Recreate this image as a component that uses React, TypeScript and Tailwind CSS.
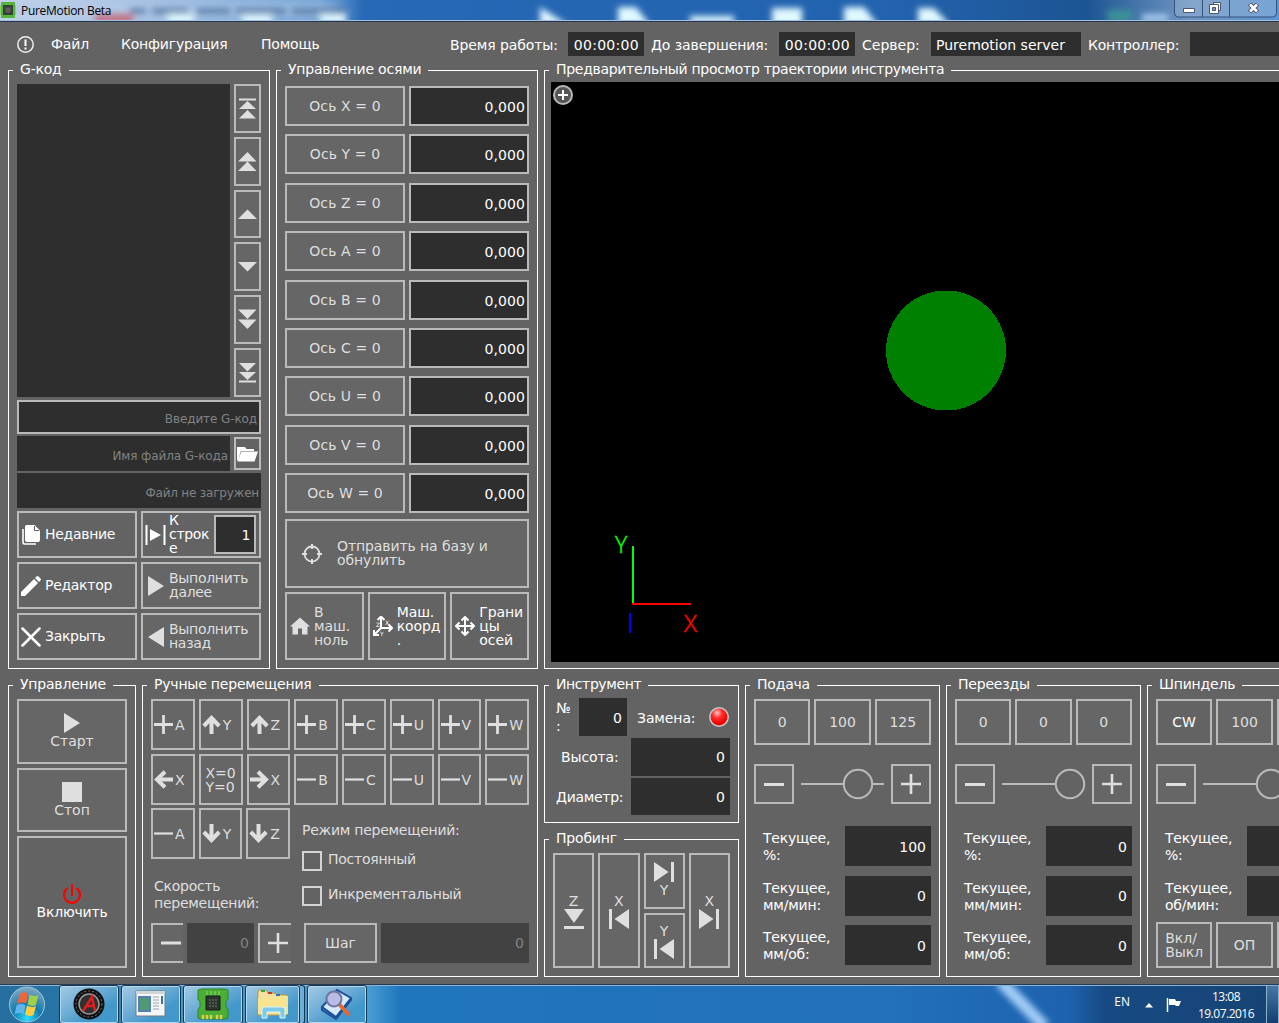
import type { ReactNode } from "react";

const FG = "#dfdfdf";

function Group({ title, className = "", titleClass = "tracking-[-0.2px]", children }: { title: string; className?: string; titleClass?: string; children?: ReactNode }) {
  return (
    <section className={`relative shrink-0 border border-white ${className}`}>
      <h2 className={`absolute -top-[12px] left-[4px] bg-[#636363] pr-[7px] pl-[7px] text-[14px] leading-[20px] whitespace-nowrap text-white ${titleClass}`}>
        {title}
      </h2>
      {children}
    </section>
  );
}

function Btn({ className = "", on = false, children }: { className?: string; on?: boolean; children?: ReactNode }) {
  return (
    <button
      className={`flex items-center overflow-hidden border-2 border-[#bababa] text-left text-[14px] leading-[14px] whitespace-pre ${on ? "bg-[#636363] text-white" : "bg-[#666666] text-[#dfdfdf]"} ${className}`}
    >
      {children}
    </button>
  );
}

function Field({ className = "", children }: { className?: string; children?: ReactNode }) {
  return (
    <div className={`flex shrink-0 items-center bg-[#2e2e2e] text-[14px] leading-[16px] text-white ${className}`}>
      {children}
    </div>
  );
}

function Svg({ w = 20, h = 20, box, className = "", children }: { w?: number; h?: number; box?: string; className?: string; children: ReactNode }) {
  return (
    <svg width={w} height={h} viewBox={box ?? `0 0 ${w} ${h}`} fill="none" className={`shrink-0 ${className}`}>
      {children}
    </svg>
  );
}

const SCROLL = [
  <><path d="M1 1.500h17" stroke={FG} strokeWidth="2" /><path d="M9.500 3l8.500 8H1zM9.500 12l8.500 8.500H1z" fill={FG} /></>,
  <path d="M9.500 1l9 9.500H0zM9.500 10.500l9 9.500H0z" fill={FG} />,
  <path d="M9.500 5.500l9.500 9.500H0z" fill={FG} />,
  <path d="M9.500 15.500l9.500-9.500H0z" fill={FG} />,
  <path d="M9.500 10l9-9.500H0zM9.500 20l9-9.500H0z" fill={FG} />,
  <><path d="M1 19.500h17" stroke={FG} strokeWidth="2" /><path d="M9.500 9.500l8.500-8.500H1zM9.500 18l8.500-8H1z" fill={FG} /></>,
];

function GCode() {
  return (
    <Group title="G-код" className="flex h-[599px] w-[262px] flex-col pt-[13px] pr-[8px] pl-[8px]">
      <div className="flex h-[313px] gap-1">
        <div className="w-[213px] bg-[#2e2e2e]" />
        <div className="flex w-[27px] flex-col gap-1">
          {SCROLL.map((icon, i) => (
            <Btn key={i} className="flex-1 justify-center"><Svg w={19} h={21}>{icon}</Svg></Btn>
          ))}
        </div>
      </div>
      <div className="mt-[3px] flex h-[34px] items-center justify-end border-2 border-[#bababa] bg-[#2e2e2e] pt-[4px] pr-[2px] text-[12px] tracking-[-0.1px] text-[#828282]">Введите G-код</div>
      <div className="mt-[2px] flex h-[35px] items-center gap-1">
        <div className="flex h-[35px] w-[213px] items-center justify-end bg-[#2e2e2e] pt-[5px] pr-[2px] text-[12px] tracking-[-0.1px] text-[#828282]">Имя файла G-кода</div>
        <Btn on className="h-[33px] w-[27px] justify-center">
          <Svg w={21} h={16}><path d="M0 1h8l1.500 2H17v2H4L1.500 13 0 15zM4.500 5.500H21L17.500 15.500H0.500z" fill="#fff" /></Svg>
        </Btn>
      </div>
      <div className="mt-[2px] flex h-[35px] items-center justify-end bg-[#2e2e2e] pt-[5px] pr-[2px] text-[12px] tracking-[-0.2px] text-[#828282]">Файл не загружен</div>
      <div className="mt-[3px] grid grid-cols-2 grid-rows-[47px_47px_47px] gap-1 tracking-[-0.3px]">
        <Btn on className="gap-[4px] pl-[2px]">
          <Svg><path d="M2 4v13.500q0 1.500 1.500 1.500H15" stroke="#fff" strokeWidth="1.600" /><path d="M5.500 0h8L19 5.500V15q0 2-2 2H6q-2 0-2-2V2q0-2 1.500-2z" fill="#fff" /><path d="M13.500 1v4.500H18" stroke="#636363" /></Svg>
          <span className="pb-[2px]">Недавние</span>
        </Btn>
        <Btn on className="gap-[3px] pl-[2px]">
          <Svg w={21}><path d="M1.500 0v20M19.500 0v20" stroke="#fff" strokeWidth="2" /><path d="M5 4l11 6-11 6z" fill="#fff" /></Svg>
          <span className="w-[42px] pb-[2px]">{"К\nстрок\nе"}</span>
          <Field className="h-[39px] w-[42px] justify-end border-2 border-[#bababa] pr-[4px]">1</Field>
        </Btn>
        <Btn on className="gap-[4px] pl-[2px]">
          <Svg><path d="M0 20v-4L13 3l4 4L4 20zM14 2l1.500-1.500q1-.8 2 0l2 2q.8 1 0 2L18 6z" fill="#fff" /></Svg>
          <span className="pb-[2px]">Редактор</span>
        </Btn>
        <Btn className="gap-[5px] pl-[5px]">
          <Svg w={16}><path d="M0 0l16 10L0 20z" fill={FG} /></Svg>
          <span className="pb-[2px]">{"Выполнить\nдалее"}</span>
        </Btn>
        <Btn on className="gap-[4px] pl-[2px]">
          <Svg><path d="M1.500 1.500l17 17M18.500 1.500l-17 17" stroke="#fff" strokeWidth="2.500" strokeLinecap="round" /></Svg>
          <span className="pb-[2px]">Закрыть</span>
        </Btn>
        <Btn className="gap-[5px] pl-[5px]">
          <Svg w={16}><path d="M16 0L0 10l16 10z" fill={FG} /></Svg>
          <span className="pb-[2px]">{"Выполнить\nназад"}</span>
        </Btn>
      </div>
    </Group>
  );
}

function Axes() {
  return (
    <Group title="Управление осями" className="h-[599px] w-[262px] px-[8px] pt-[15px]">
      <div className="flex h-[427px] flex-col justify-between">
        {["X", "Y", "Z", "A", "B", "C", "U", "V", "W"].map((a) => (
          <div key={a} className="flex h-[40px] gap-1">
            <Btn className="w-[120px] justify-center tracking-[0.1px]">Ось {a} = 0</Btn>
            <Field className="w-[120px] justify-end border-2 border-[#bababa] pt-[2px] pr-[2px] tracking-[0.1px]">0,000</Field>
          </div>
        ))}
      </div>
      <Btn className="mt-[6px] h-[69px] w-full gap-[15px] pl-[15px] tracking-[-0.1px]">
        <Svg><circle cx="10" cy="10" r="7.500" stroke={FG} strokeWidth="1.800" /><path d="M10 0v5M10 15v5M0 10h5M15 10h5" stroke={FG} strokeWidth="2" /></Svg>
        <span className="pb-[2px]">{"Отправить на базу и\nобнулить"}</span>
      </Btn>
      <div className="mt-1 flex h-[68px] gap-1 tracking-[-0.1px]">
        <Btn className="flex-1 gap-[4px] pl-[3px]">
          <Svg><path d="M10 1.500l10 9h-2.500V18.500H12v-6H8v6H2.500v-8H0z" fill={FG} /></Svg>
          <span>{"В\nмаш.\nноль"}</span>
        </Btn>
        <Btn on className="flex-1 gap-[4px] pl-[3px]">
          <Svg>
            <path d="M8 1v11H19M8 12l-7 7" stroke="#fff" strokeWidth="2" />
            <path d="M4.500 4L8 .5 11.500 4M15.500 8.500L19 12l-3.500 3.500M1 14v5h5" stroke="#fff" strokeWidth="2" />
            <text x="12" y="9" fontSize="6" fill="#fff">X</text><text x="3" y="11" fontSize="6" fill="#fff">Z</text><text x="7" y="20" fontSize="6" fill="#fff">Y</text>
          </Svg>
          <span>{"Маш.\nкоорд\n."}</span>
        </Btn>
        <Btn on className="flex-1 gap-[4px] pl-[3px]">
          <Svg><path d="M10 1.500v17M1.500 10h17" stroke="#fff" strokeWidth="2" /><path d="M6.500 4.500L10 1l3.500 3.500M6.500 15.500L10 19l3.500-3.500M4.500 6.500L1 10l3.500 3.500M15.500 6.500L19 10l-3.500 3.500" stroke="#fff" strokeWidth="2" /></Svg>
          <span>{"Грани\nцы\nосей"}</span>
        </Btn>
      </div>
    </Group>
  );
}

function Preview() {
  return (
    <Group title="Предварительный просмотр траектории инструмента" titleClass="tracking-[-0.3px]" className="h-[599px] w-[760px] pt-[11px] pl-[6px]">
      <svg width="753" height="580" viewBox="551 82 753 580" className="block bg-black">
        <circle cx="563" cy="95" r="9" fill="#555" stroke="#bababa" strokeWidth="2" />
        <path d="M563 90v10M558 95h10" stroke="#fff" strokeWidth="2" />
        <circle cx="946" cy="350.500" r="60" fill="#008000" shapeRendering="crispEdges" />
        <path d="M633 546v58" stroke="#0f0" strokeWidth="2" />
        <path d="M632 604h59" stroke="#f00" strokeWidth="2" />
        <path d="M630 613v20" stroke="#00f" strokeWidth="2" />
        <text x="615" y="553" fontSize="23" fontFamily="Open Sans" fontWeight="300" fill="#0f0" stroke="#0f0" strokeWidth=".5">Y</text>
        <text x="684" y="632" fontSize="24" fontFamily="Open Sans" fontWeight="300" fill="#f00" stroke="#f00" strokeWidth=".5">X</text>
      </svg>
    </Group>
  );
}

function Control() {
  return (
    <Group title="Управление" className="flex h-[292px] w-[128px] flex-col gap-1 px-[8px] pt-[13px]">
      <Btn className="h-[65px] flex-col justify-center">
        <Svg w={18} className="ml-[-1px]"><path d="M1 0l16 10L1 20z" fill={FG} /></Svg>
        <span className="leading-[17px]">Старт</span>
      </Btn>
      <Btn className="h-[64px] flex-col justify-center">
        <Svg><path d="M0 0h20v20H0z" fill={FG} /></Svg>
        <span className="mb-[1px] leading-[16px]">Стоп</span>
      </Btn>
      <Btn on className="h-[132px] flex-col justify-center tracking-[-0.2px]">
        <Svg><path d="M10 0v12" stroke="#f00" strokeWidth="2" /><path d="M5.500 4.200a8 8 0 1 0 9 0" stroke="#f00" strokeWidth="2.200" /></Svg>
        <span className="mb-[1px] leading-[16px]">Включить</span>
      </Btn>
    </Group>
  );
}

const JOG: Record<string, string> = {
  "+": "M9.500 0v19M0 9.500h19",
  "-": "M0 9.500h19",
  u: "M9.500 19V3M1.800 11L9.500 3l7.700 8",
  d: "M9.500 0v16M1.800 8l7.700 8 7.700-8",
  l: "M19 9.500H3M11 1.800L3 9.500l8 7.700",
  r: "M0 9.500h16M8 1.800l8 7.700-8 7.700",
};

function Jog({ k }: { k: string }) {
  if (k === "0") return <Btn className="justify-center">{"X=0\nY=0"}</Btn>;
  const t = k[0];
  return (
    <Btn className="gap-[2px] pl-[1px]">
      <Svg w={19} h={19}><path d={JOG[t]} stroke={FG} strokeWidth={t === "+" ? 2.8 : t === "-" ? 2.2 : 4} /></Svg>
      <span>{k[1]}</span>
    </Btn>
  );
}

function Manual() {
  return (
    <Group title="Ручные перемещения" className="h-[292px] w-[396px] pt-[13px] pr-[8px] pl-[8px]">
      <div className="grid h-[106px] grid-cols-8 grid-rows-2 gap-1">
        {["+A", "uY", "uZ", "+B", "+C", "+U", "+V", "+W", "lX", "0", "rX", "-B", "-C", "-U", "-V", "-W"].map((k) => <Jog key={k} k={k} />)}
      </div>
      <div className="flex tracking-[-0.25px] text-[#dfdfdf]">
        <div className="w-[151px] shrink-0">
          <div className="mt-[3px] grid h-[51px] w-[139px] grid-cols-3 gap-1">
            {["-A", "dY", "dZ"].map((k) => <Jog key={k} k={k} />)}
          </div>
          <div className="mt-[19px] pl-[3px] text-[14px] leading-[17px] whitespace-pre">{"Скорость\nперемещений:"}</div>
        </div>
        <div className="pt-[16px] text-[14px] leading-[18px]">
          <div>Режим перемещений:</div>
          <div className="mt-[11px] flex h-[21px] items-center gap-[6px]"><span className="size-[20px] border-2 border-[#d4d4d4]" /><span className="pb-[3px]">Постоянный</span></div>
          <div className="mt-[14px] flex h-[21px] items-center gap-[6px]"><span className="size-[20px] border-2 border-[#d4d4d4]" /><span className="pb-[3px]">Инкрементальный</span></div>
        </div>
      </div>
      <div className="mt-[11px] flex h-[40px]">
        <Btn className="w-[32px] border-r-0 pl-[8px]"><Svg><path d="M0 10h20" stroke={FG} strokeWidth="3" /></Svg></Btn>
        <div className="ml-1 flex w-[67px] items-center justify-end bg-[#424242] pr-[5px] text-[14px] text-[#828282]">0</div>
        <Btn className="ml-1 w-[33px] border-r-0 pl-[8px]"><Svg><path d="M0 10h20M10 0v20" stroke={FG} strokeWidth="2.600" /></Svg></Btn>
        <Btn className="ml-[13px] w-[73px] justify-center">Шаг</Btn>
        <div className="ml-1 flex w-[148px] items-center justify-end bg-[#424242] pr-[5px] text-[14px] text-[#828282]">0</div>
      </div>
    </Group>
  );
}

const TRI_R = <><path d="M0 0l14.500 10L0 20z" fill={FG} /><path d="M18.500 0v20" stroke={FG} strokeWidth="3" /></>;
const TRI_L = <><path d="M20 0L5.500 10 20 20z" fill={FG} /><path d="M1.500 0v20" stroke={FG} strokeWidth="3" /></>;

function Tool() {
  return (
    <div className="flex shrink-0 flex-col gap-[16px]">
      <Group title="Инструмент" titleClass="tracking-[-0.4px]" className="flex h-[138px] w-[195px] flex-col gap-[2px] pt-[12px] pr-[8px] text-[14px] text-white">
        <div className="flex h-[38px] shrink-0 items-center">
          <div className="w-[34px] pl-[11px] leading-[18px] whitespace-pre">{"№\n:"}</div>
          <Field className="h-[38px] w-[48px] justify-end pt-[2px] pr-[5px]">0</Field>
          <div className="ml-[10px] w-[71px] pt-[2px] tracking-[-0.1px]">Замена:</div>
          <Svg w={22} h={22}>
            <defs><radialGradient id="led" cx=".4" cy=".28" r=".6"><stop offset="0" stopColor="#ffc8c8" /><stop offset=".45" stopColor="#ff3030" /><stop offset="1" stopColor="#f00000" /></radialGradient></defs>
            <circle cx="11" cy="11" r="9.200" fill="url(#led)" stroke="#c8c8c8" strokeWidth="1.600" />
          </Svg>
        </div>
        <div className="flex h-[38px] shrink-0 items-center justify-between"><div className="pl-[16px] tracking-[-0.1px]">Высота:</div><Field className="h-[38px] w-[99px] justify-end pr-[5px]">0</Field></div>
        <div className="flex h-[37px] shrink-0 items-center justify-between"><div className="pt-[1px] pl-[11px] tracking-[-0.3px]">Диаметр:</div><Field className="h-[37px] w-[99px] justify-end pt-[1px] pr-[5px]">0</Field></div>
      </Group>
      <Group title="Пробинг" className="grid h-[138px] w-[195px] grid-cols-4 gap-1 px-[8px] pt-[13px] pb-[8px]">
        <Btn className="flex-col justify-center gap-[1px] pt-[1px]"><span>Z</span><Svg><path d="M0 0h20L10 14z" fill={FG} /><path d="M0 18.500h20" stroke={FG} strokeWidth="3" /></Svg></Btn>
        <Btn className="flex-col justify-center gap-[1px] pt-[2px]"><span>X</span><Svg>{TRI_L}</Svg></Btn>
        <div className="flex flex-col gap-1">
          <Btn className="flex-1 flex-col justify-center gap-[1px] pb-[2px]"><Svg>{TRI_R}</Svg><span>Y</span></Btn>
          <Btn className="flex-1 flex-col justify-center gap-[1px] pt-[2px]"><span>Y</span><Svg>{TRI_L}</Svg></Btn>
        </div>
        <Btn className="flex-col justify-center gap-[1px] pt-[2px]"><span>X</span><Svg>{TRI_R}</Svg></Btn>
      </Group>
    </div>
  );
}

function Rate({ title, top, knob, rows, bottom }: { title: string; top: string[]; knob: number; rows: [string, string][]; bottom?: string[] }) {
  return (
    <Group title={title} className="h-[292px] w-[195px] px-[8px] pt-[13px] text-[14px] text-white">
      <div className="grid h-[46px] grid-cols-3 gap-1">
        {top.map((t, i) => <Btn key={i} on={t === "CW"} className="justify-center">{t}</Btn>)}
      </div>
      <div className="mt-[19px] flex h-[40px] items-center justify-between">
        <Btn className="h-[40px] w-[40px] justify-center"><Svg><path d="M0 10.500h20" stroke={FG} strokeWidth="3" /></Svg></Btn>
        <Svg w={85} h={32}>
          <path d="M1 16h83" stroke="#bababa" strokeWidth="2" />
          <circle cx={knob} cy="16" r="14.200" fill="#636363" stroke="#bababa" strokeWidth="2" />
        </Svg>
        <Btn className="h-[40px] w-[40px] justify-center"><Svg><path d="M0 10h20M10 0v20" stroke={FG} strokeWidth="2.600" /></Svg></Btn>
      </div>
      <div className="mt-[22px] flex flex-col gap-[9.500px]">
        {rows.map(([l, v]) => (
          <div key={l} className="flex h-[40px] items-center justify-between">
            <div className="pt-[2px] pl-[9px] leading-[17px] tracking-[-0.2px] whitespace-pre">{l}</div>
            <Field className="h-[40px] w-[86px] justify-end pt-[1px] pr-[5px]">{v}</Field>
          </div>
        ))}
      </div>
      {bottom && (
        <div className="mt-[6px] grid h-[46px] grid-cols-3 gap-1">
          {bottom.map((t, i) => <Btn key={i} className="justify-center">{t}</Btn>)}
        </div>
      )}
    </Group>
  );
}

function TitleBar() {
  return (
    <div className="relative flex h-[22px] items-center overflow-hidden border-b border-[#27364f] bg-[#2568b5]">
      <svg width="1279" height="22" className="absolute inset-0">
        <defs>
          <filter id="b" x="-50%" y="-100%" width="200%" height="300%"><feGaussianBlur stdDeviation="3" /></filter>
          <filter id="b2" x="-50%" y="-100%" width="200%" height="300%"><feGaussianBlur stdDeviation="9 5" /></filter>
          <linearGradient id="tb"><stop offset="0" stopColor="#c4d3e8" /><stop offset=".1" stopColor="#aac3e4" /><stop offset=".25" stopColor="#6b9fd5" /><stop offset=".285" stopColor="#2769b6" /><stop offset=".7" stopColor="#2262ae" /><stop offset=".85" stopColor="#1d5593" /><stop offset=".93" stopColor="#6f96c2" /><stop offset="1" stopColor="#5f94cf" /></linearGradient>
        </defs>
        <path d="M0 0h1279v22H0z" fill="url(#tb)" />
        <path d="M0 2h340v16H0z" fill="#b4cbe7" opacity=".6" filter="url(#b2)" />
        <g filter="url(#b)">
          <path d="M130 11h16M152 11h36M196 11h34M236 11h50M292 11h54" stroke="#3b5f8d" strokeWidth="5" opacity=".75" />
          <path d="M95 14h38v10H95z" fill="#c56b7c" opacity=".9" />
          <path d="M168 14h26v10H168zM242 15h30v10H242zM320 14h26v10H320zM540 7l28 18H540zM618 7h18l14 18H618zM690 16h44v8H690zM772 8h30v18H772zM844 7h20l14 18H844zM918 8h16l16 17H918z" fill="#e0f8ff" />
          <path d="M1108 10h24v12H1108z" fill="#3b9296" /><path d="M1142 14h26v8H1142z" fill="#a4c9ee" />
        </g>
        <path d="M0 20.500h1279" stroke="#a5c0df" />
        <path d="M1174.500 0v13q0 4 4 4h94q4 0 4-4V0M1202.500 0v17M1229.500 0v17" fill="#fff" fillOpacity=".15" stroke="#35527d" />
        <path d="M1183.500 8.500h11v4h-11z" fill="#fff" stroke="#4b5770" />
        <path d="M1213.500 2.500h7v8h-7z" fill="#fff" stroke="#4b5770" />
        <path d="M1209.500 4.500h9v9h-9z" fill="#fff" stroke="#4b5770" /><path d="M1212.500 7.500h3v3h-3z" fill="#7b98bd" stroke="#4b5770" />
        <path d="M1249.500 4l8 8M1257.500 4l-8 8" stroke="#4b5770" strokeWidth="4.500" /><path d="M1250 4.500l7 7M1257 4.500l-7 7" stroke="#fff" strokeWidth="2.500" />
      </svg>
      <Svg w={16} h={16} className="relative -mt-[1px]"><path d="M1 0h14v16H1z" fill="#55b53c" /><path d="M0 3h1v10H0M15 3h1v10h-1" fill="#8fd070" /><path d="M3 3h10v10H3z" fill="#38423a" /><path d="M5.500 5.500h5v5h-5z" fill="#5c615c" /></Svg>
      <span className="relative ml-[5px] font-['Open_Sans'] text-[12px] leading-[20px] tracking-[-0.3px] text-black">PureMotion Beta</span>
    </div>
  );
}

function MenuBar() {
  return (
    <div className="flex h-[48px] items-start overflow-hidden pt-[10px] text-[14px] leading-[24px] whitespace-nowrap text-white">
      <Svg w={18} h={18} className="mt-[3px] ml-[16px]"><circle cx="9.500" cy="9.500" r="7.700" stroke="#eee" strokeWidth="1.500" /><path d="M9.500 4.500V11M9.500 12.500v2" stroke="#fff" strokeWidth="2" /></Svg>
      <div className="ml-[17px] w-[70px] shrink-0 tracking-[-0.2px]">Файл</div>
      <div className="w-[140px] shrink-0 tracking-[-0.2px]">Конфигурация</div>
      <div className="w-[189px] shrink-0 tracking-[-0.2px]">Помощь</div>
      <div className="w-[118px] shrink-0 pt-[1px] tracking-[-0.1px]">Время работы:</div>
      <Field className="h-[24px] w-[76px] justify-end pt-[2px] pr-[5px] tracking-[0.3px]">00:00:00</Field>
      <div className="w-[135px] shrink-0 pt-[1px] pl-[7px] tracking-[-0.1px]">До завершения:</div>
      <Field className="h-[24px] w-[76px] justify-end pt-[2px] pr-[5px] tracking-[0.3px]">00:00:00</Field>
      <div className="w-[76px] shrink-0 pt-[1px] pl-[7px]">Сервер:</div>
      <Field className="h-[24px] w-[150px] pt-[2px] pl-[5px]">Puremotion server</Field>
      <div className="w-[109px] shrink-0 pt-[1px] pl-[7px] tracking-[-0.2px]">Контроллер:</div>
      <Field className="h-[24px] w-[100px]" />
    </div>
  );
}

function Task({ className = "w-[60px]", children }: { className?: string; children: ReactNode }) {
  return (
    <div className={`flex h-[39px] items-center justify-center rounded-[3px] border border-[#18384f] bg-linear-to-br from-[#a3cbe3] to-[#4398cb] to-70% inset-ring inset-ring-[#b7d8ec] ${className}`}>
      {children}
    </div>
  );
}

function TaskBar() {
  return (
    <div className="relative flex h-[39px] items-center overflow-hidden border-t border-[#253c58] bg-[linear-gradient(90deg,#266f9f_0px,#2775a6_60px,#4297cb_180px,#459cd3_370px,#2076bd_400px,#2270b9_900px,#1d62ae_1070px,#174a83_1105px,#164374_1279px)] font-['Open_Sans'] text-white">
      <svg width="1279" height="39" className="absolute inset-0"><path d="M1000-4L1045 42" stroke="#a9d2fa" strokeWidth="12" filter="url(#b)" opacity=".95" /><path d="M0 .5h1279" stroke="#8fb4d2" /></svg>
      <Svg w={40} h={38} className="relative ml-[7px]">
        <defs><radialGradient id="orb" cx=".5" cy=".9" r=".9"><stop offset="0" stopColor="#2ce0ff" /><stop offset=".45" stopColor="#1379ad" /><stop offset="1" stopColor="#86a9c2" /></radialGradient></defs>
        <circle cx="20" cy="19.500" r="17.500" fill="url(#orb)" stroke="#9cc6de" />
        <path d="M13 9q4-3 8-.5l-2 10q-4-2-9 .5z" fill="#f0653a" /><path d="M22.500 9.500q5 2.500 9 .5l-2.500 10q-4 2-8.500-.500z" fill="#9fce4b" />
        <path d="M9.500 20.500q4-2.500 9-.5l-2 9q-4-2-9 .5z" fill="#60b5ee" /><path d="M20 20.500q5 2.500 9 .5l-2.500 9q-4 2-8.500-.500z" fill="#fdcb3f" />
      </Svg>
      <div className="relative ml-[12px] flex gap-[2px]">
        <Task><Svg w={32} h={32}><circle cx="16" cy="16" r="15.500" fill="#0e1011" /><circle cx="16" cy="16" r="10" stroke="#999" strokeWidth="1.500" fill="#303030" /><circle cx="16" cy="16" r="13" stroke="#777" strokeDasharray="2 2" /><path d="M10 23l9-14 3 14M13 18h9" stroke="#e11c1c" strokeWidth="2.500" /></Svg></Task>
        <Task><Svg w={32} h={28}><path d="M1 1h29v25H1z" fill="#f3f5f6" stroke="#6f7d86" /><path d="M1 1h29v3H1z" fill="#cfd6da" /><path d="M4 7h11v14H4z" fill="#4f9a72" stroke="#587fb5" strokeWidth="2" /><path d="M18 7h6M18 10h6M18 13h6M18 16h6M18 19h6" stroke="#9aa" /><path d="M27 6v8" stroke="#3878a0" strokeWidth="2" /></Svg></Task>
        <Task><Svg w={32} h={32}><path d="M1 2l4-1h22l4 1v9l-2 3v5l2 3v8l-3 1H4l-3-1v-8l2-3v-5l-2-3z" fill="#4caf35" stroke="#318421" /><path d="M9 8h14v14H9z" fill="#2d332f" stroke="#1a1d1a" /><path d="M12 12h8M12 15h8M12 18h8" stroke="#777d62" strokeDasharray="2 1" /><path d="M6 27v4M10 27v4M14 27v4M20 27v4M24 27v4" stroke="#e1cf4b" strokeWidth="2.500" /><path d="M10 3v4M14 3v4M18 3v4M22 3v4" stroke="#8bd76e" /></Svg></Task>
        <div className="flex w-[60px]">
          <Task className="w-[55px] shrink-0"><Svg w={34} h={32}><path d="M2 4q0-2 2-2h6l2 3h5l8 2h6v20H2z" fill="#f4e1a0" stroke="#b99a45" /><path d="M2 10h20l2-2h8v18H2z" fill="#f9e38f" /><path d="M5 3h4" stroke="#2ca74b" strokeWidth="2" /><path d="M12 5h4" stroke="#c43a28" strokeWidth="2" /><path d="M20 7h4" stroke="#2378b8" strokeWidth="2" /><path d="M6 30v-8q0-3 3-3h17q3 0 3 3v8h-5v-6H11v6z" fill="#7ecbe9" stroke="#d8f3fb" /></Svg></Task>
          <div className="h-[39px] w-[5px] rounded-r-[3px] border-y border-r border-[#18384f] bg-[#6cb0d8]" />
        </div>
        <Task><Svg w={34} h={34}><path d="M2 20L17 3l14 8-15 19z" fill="#d3ebfa" stroke="#1c4f98" strokeWidth="2" /><path d="M2 20v3l14 9 15-19v-2" stroke="#1c4f98" strokeWidth="2" /><path d="M20 18l8 9" stroke="#e46833" strokeWidth="4" strokeLinecap="round" /><circle cx="14" cy="12" r="7.500" fill="#b9bde5" stroke="#7373a1" strokeWidth="2" /></Svg></Task>
      </div>
      <div className="relative ml-auto flex items-center">
        <span className="-mt-[4px] text-[12px]">EN</span>
        <Svg w={8} h={5} className="mt-[2px] ml-[15px]"><path d="M4 0l4 4.500H0z" fill="#fff" /></Svg>
        <Svg w={16} h={16} className="mt-[2px] ml-[13px]"><path d="M1.500 1v14" stroke="#fff" strokeWidth="1.500" /><path d="M3 2h6l1 2h5l-2 5h-3L9 8H3z" fill="#fff" /></Svg>
        <div className="ml-[14px] w-[60px] pt-[1px] text-center text-[12px] leading-[17px] tracking-[-0.5px]">13:08<br />19.07.2016</div>
        <div className="ml-[10px] h-[39px] w-[13px] border border-[#8fb0cc] bg-linear-to-b from-[#4777a5] to-[#143e72]" />
      </div>
    </div>
  );
}

export default function App() {
  return (
    <div className="h-[1023px] w-[1279px] overflow-hidden bg-[#636363] font-['DejaVu_Sans',sans-serif]">
      <TitleBar />
      <MenuBar />
      <main className="ml-[8px] h-[914px]">
        <div className="flex gap-[6px]"><GCode /><Axes /><Preview /></div>
        <div className="mt-[16px] flex gap-[6px]">
          <Control />
          <Manual />
          <Tool />
          <Rate title="Подача" top={["0", "100", "125"]} knob={58} rows={[["Текущее,\n%:", "100"], ["Текущее,\nмм/мин:", "0"], ["Текущее,\nмм/об:", "0"]]} />
          <Rate title="Переезды" top={["0", "0", "0"]} knob={69} rows={[["Текущее,\n%:", "0"], ["Текущее,\nмм/мин:", "0"], ["Текущее,\nмм/об:", "0"]]} />
          <Rate title="Шпиндель" top={["CW", "100", ""]} knob={69} rows={[["Текущее,\n%:", ""], ["Текущее,\nоб/мин:", ""]]} bottom={["Вкл/\nВыкл", "ОП", ""]} />
        </div>
      </main>
      <TaskBar />
    </div>
  );
}
